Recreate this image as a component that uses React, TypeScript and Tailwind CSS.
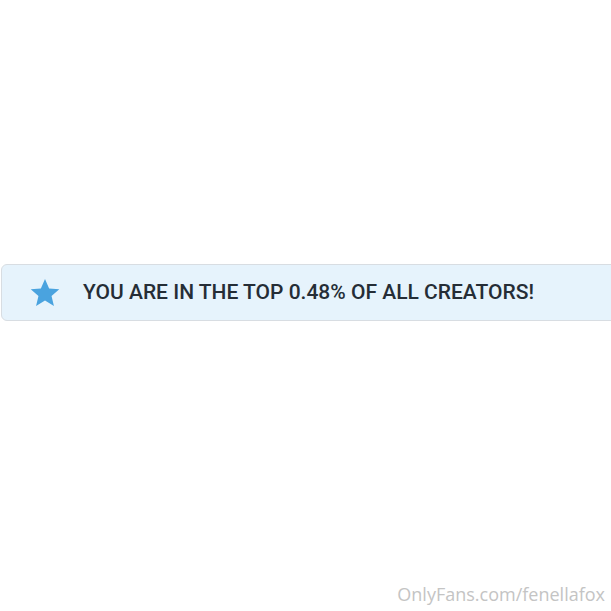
export default function App() {
  return (
    <div className="w-[611px] h-[611px] overflow-hidden bg-white flex flex-col">
      {/* Banner */}
      <div className="mt-[264px] ml-[1px] w-[640px] h-[57px] rounded-[6px] border border-[#d8dde2] bg-[#e6f3fc] flex items-center">
        <svg width="34" height="32" viewBox="0 0 24 24" className="ml-[26px] shrink-0">
          <path
            d="M12 1.5l3.1 7.1 7.6.6-5.8 5 1.8 7.5L12 17.7l-6.7 4 1.8-7.5-5.8-5 7.6-.6z"
            fill="#4aa3df"
          />
        </svg>
        <span
          className="ml-[21px] text-[21px] font-medium text-[#252d36]"
          style={{ fontFamily: "Roboto, sans-serif" }}
        >
          YOU ARE IN THE TOP 0.48% OF ALL CREATORS!
        </span>
      </div>

      {/* Watermark */}
      <div
        className="mt-auto mb-[3px] self-end mr-[6px] text-[18px] text-[#c4c4c4]"
        style={{ fontFamily: "'Open Sans', sans-serif" }}
      >
        OnlyFans.com/fenellafox
      </div>
    </div>
  );
}
